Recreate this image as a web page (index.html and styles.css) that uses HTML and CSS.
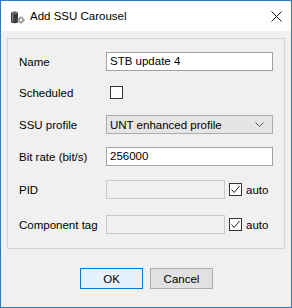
FILE: index.html
```html
<!DOCTYPE html>
<html>
<head>
<meta charset="utf-8">
<link rel="stylesheet" href="styles.css">
</head>
<body>
<div class="window">
  <div class="titlebar">
    <svg class="appicon" width="15" height="14" viewBox="0 0 15 14">
      <path d="M1 2.5 Q4.5 0.5 8 2.5 L8 12.5 Q4.5 14 1 12.5 Z" fill="#3a3a3a"/>
      <path d="M1 2.5 Q4.5 4 8 2.5" fill="none" stroke="#9a9a9a" stroke-width="1"/>
      <rect x="2" y="4" width="1.5" height="8" fill="#777"/>
      <circle cx="11" cy="10" r="3" fill="#9a9a9a"/>
      <circle cx="11" cy="10" r="1.2" fill="#fff"/>
      <path d="M11 6.2 V7.4 M11 12.6 V13.8 M7.2 10 H8.4 M13.6 10 H14.8" stroke="#9a9a9a" stroke-width="1.4"/>
    </svg>
    <span class="title">Add SSU Carousel</span>
    <svg class="close" width="11" height="11" viewBox="0 0 11 11">
      <path d="M0.5 0.5 L10.5 10.5 M10.5 0.5 L0.5 10.5" stroke="#111" stroke-width="1"/>
    </svg>
  </div>
  <div class="group">
    <div class="row r-name">
      <span class="label">Name</span>
      <div class="input">STB update 4</div>
    </div>
    <div class="row r-sched">
      <span class="label">Scheduled</span>
      <span class="check sched"></span>
    </div>
    <div class="row r-profile">
      <span class="label">SSU profile</span>
      <div class="select">
        <span>UNT enhanced profile</span>
        <svg width="9" height="5" viewBox="0 0 9 5"><path d="M0.5 0.5 L4.5 4.5 L8.5 0.5" fill="none" stroke="#555" stroke-width="1"/></svg>
      </div>
    </div>
    <div class="row r-bit">
      <span class="label">Bit rate (bit/s)</span>
      <div class="input">256000</div>
    </div>
    <div class="row r-pid">
      <span class="label">PID</span>
      <div class="input disabled short"></div>
      <span class="check checked"><svg width="11" height="11" viewBox="0 0 11 11"><path d="M1.5 5.5 L4.2 8.5 L9.5 2" fill="none" stroke="#222" stroke-width="1"/></svg></span>
      <span class="auto">auto</span>
    </div>
    <div class="row r-tag">
      <span class="label">Component tag</span>
      <div class="input disabled short"></div>
      <span class="check checked"><svg width="11" height="11" viewBox="0 0 11 11"><path d="M1.5 5.5 L4.2 8.5 L9.5 2" fill="none" stroke="#222" stroke-width="1"/></svg></span>
      <span class="auto">auto</span>
    </div>
  </div>
  <div class="buttons">
    <button class="btn ok">OK</button>
    <button class="btn">Cancel</button>
  </div>
</div>
</body>
</html>
```
FILE: styles.css
```css
html, body {
  margin: 0;
  padding: 0;
  background: #f0f0f0;
}
body {
  font-family: "Liberation Sans", Arial, sans-serif;
  font-size: 11.5px;
  color: #000;
}
.window {
  width: 292px;
  height: 308px;
  box-sizing: border-box;
  border: 1px solid #2b7bcb;
  background: #f0f0f0;
}
.titlebar {
  height: 30px;
  background: #fff;
  display: flex;
  align-items: center;
}
.appicon {
  margin-left: 9px;
  margin-top: 2px;
}
.title {
  margin-left: 5px;
  font-size: 11.5px;
  color: #000;
  flex: 1;
}
.close {
  margin-right: 9px;
  margin-top: 1px;
}
.group {
  margin: 7px 6px 0 6px;
  height: 211px;
  box-sizing: border-box;
  border: 1px solid #d5d5d5;
  padding: 13px 11px 0 11px;
}
.row {
  display: flex;
  align-items: center;
  height: 19px;
}
.r-sched { margin-top: 12px; }
.r-profile { margin-top: 13px; }
.r-bit { margin-top: 13px; }
.r-pid { margin-top: 14px; }
.r-tag { margin-top: 16px; }
.label {
  width: 87px;
  flex: none;
  white-space: nowrap;
}
.input {
  flex: 1;
  height: 19px;
  box-sizing: border-box;
  border: 1px solid #a2a2a2;
  background: #fff;
  padding-left: 3px;
  line-height: 17px;
}
.input.disabled {
  background: #f0f0f0;
  border-color: #cacaca;
}
.input.short {
  flex: none;
  width: 119px;
}
.select {
  flex: 1;
  height: 19px;
  box-sizing: border-box;
  border: 1px solid #adadad;
  background: #e5e5e5;
  padding: 0 8px 0 3px;
  display: flex;
  align-items: center;
  justify-content: space-between;
}
.check {
  width: 13px;
  height: 13px;
  box-sizing: border-box;
  border: 1px solid #333;
  background: #fff;
  display: flex;
  align-items: center;
  justify-content: center;
}
.check.sched {
  margin-left: 4px;
}
.check.checked {
  margin-left: 4px;
}
.auto {
  margin-left: 4px;
}
.buttons {
  display: flex;
  justify-content: center;
  gap: 7px;
  margin-top: 19px;
  padding-left: 1px;
}
.btn {
  width: 63px;
  height: 21px;
  box-sizing: border-box;
  border: 1px solid #adadad;
  background: #e1e1e1;
  font-family: "Liberation Sans", Arial, sans-serif;
  font-size: 11.5px;
  color: #000;
  padding: 0;
  margin: 0;
}
.btn.ok {
  border-color: #0078d7;
  background: #e5f1fb;
}
```
